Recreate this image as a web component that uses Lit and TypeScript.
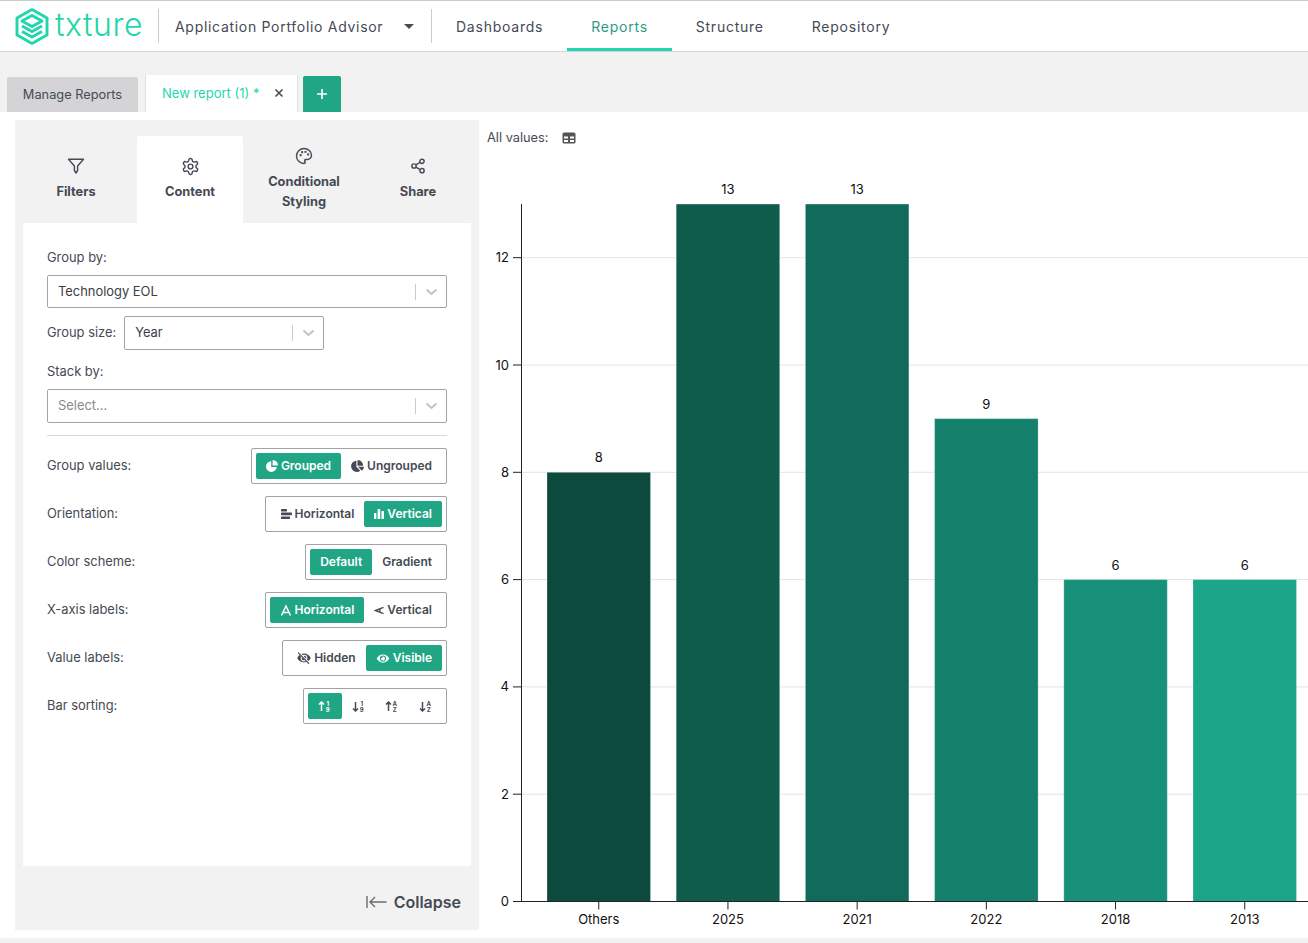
import { LitElement, html, css, svg } from "lit";
import { customElement } from "lit/decorators.js";

const PIE = "M527.79 288H290.5l158.03 158.03c6.04 6.04 15.98 6.53 22.19.68 38.7-36.46 65.32-85.61 73.13-140.86 1.34-9.46-6.51-17.85-16.06-17.85zm-15.83-64.8C503.72 103.74 408.26 8.28 288.8.04 279.68-.59 272 7.1 272 16.24V240h223.77c9.14 0 16.82-7.68 16.19-16.8zM224 288V50.71c0-9.55-8.39-17.4-17.84-16.06C86.99 51.49-4.1 155.6.14 280.37 4.5 408.51 114.83 513.59 243.03 511.98c50.4-.63 96.97-16.87 135.26-44.03 7.9-5.6 8.42-17.23 1.57-24.08L224 288z";
const EYE = "M572.52 241.4C518.29 135.59 410.93 64 288 64S57.68 135.64 3.48 241.41a32.35 32.35 0 0 0 0 29.19C57.71 376.41 165.07 448 288 448s230.32-71.64 284.52-177.41a32.35 32.35 0 0 0 0-29.19zM288 400a144 144 0 1 1 144-144 143.93 143.93 0 0 1-144 144zm0-240a95.31 95.31 0 0 0-25.31 3.79 47.85 47.85 0 0 1-66.9 66.9A95.78 95.78 0 1 0 288 160z";

const icons: Record<string, unknown> = {
  pieFull: html`<svg class="ti" width="12" height="12" viewBox="0 0 12 12" fill="currentColor"><path d="M5.200 1.200A5.400 5.400 0 1 0 10.800 7H5.200Z"/><path d="M6.600 0A5.400 5.400 0 0 1 12 5.500H6.600Z"/></svg>`,
  pieAlt: html`<svg class="ti" width="13" height="12" viewBox="0 0 544 512" fill="currentColor"><path d=${PIE}/></svg>`,
  hbars: html`<svg class="ti" width="12" height="10" viewBox="0 0 12 10" fill="currentColor"><rect x="1" y="0" width="6" height="2.400" rx=".6"/><rect x="1" y="3.600" width="11" height="2.600" rx=".6"/><rect x="1" y="7.400" width="9" height="2.600" rx=".6"/></svg>`,
  vbars: html`<svg class="ti" width="10" height="10" viewBox="0 0 10 10" fill="currentColor"><rect x="0" y="4" width="2.400" height="6" rx=".5"/><rect x="3.600" y="0" width="2.600" height="10" rx=".5"/><rect x="7.400" y="2" width="2.600" height="8" rx=".5"/></svg>`,
  letterA: html`<svg class="ti" width="12" height="11" viewBox="0 0 12 11" fill="none" stroke="currentColor" stroke-width="1.500"><path d="M1.500 10.500 6 1l4.500 9.500M3.100 7.400h5.800"/></svg>`,
  letterV: html`<svg class="ti" width="10" height="9" viewBox="0 0 11 9" fill="none" stroke="currentColor" stroke-width="1.500"><path d="M10.500 1 1.500 4.500 10.500 8M6.500 2.500v4"/></svg>`,
  eyeOff: html`<svg class="ti" width="14" height="12" viewBox="0 0 576 512" fill="currentColor"><path d=${EYE}/><path d="M60 10 520 500" stroke="#fff" stroke-width="80"/><path d="M40 30 500 500" stroke="currentColor" stroke-width="50"/></svg>`,
  eye: html`<svg class="ti" width="14" height="11" viewBox="0 0 576 512" fill="currentColor"><path d=${EYE}/></svg>`,
};

function sortIcon(down: boolean, top: string, bottom: string) {
  const arrow = down ? "M3.500 1v9M1 7.400 3.500 10 6 7.400" : "M3.500 10V1M1 3.600 3.500 1 6 3.600";
  return html`<svg width="13" height="11" viewBox="0 0 13 11">
    <path d=${arrow} fill="none" stroke="currentColor" stroke-width="1.500"/>
    <text class="mini" x="9.800" y="5" text-anchor="middle">${top}</text>
    <text class="mini" x="9.800" y="11" text-anchor="middle">${bottom}</text>
  </svg>`;
}

interface Opt { label?: string; icon?: unknown; on?: boolean; cls?: string }

@customElement("app-toggle")
class AppToggle extends LitElement {
  static properties = { opts: { attribute: false } };
  opts: Opt[] = [];
  static styles = css`
    :host { display: inline-block; }
    .box { display: flex; height: 36px; box-sizing: border-box; border: 1px solid #a3a3a3; border-radius: 2px; padding: 4px; background: #fff; }
    .opt { display: flex; align-items: center; justify-content: center; gap: 3px; height: 26px; padding: 0 10px; font: 600 12px "Inter", sans-serif; color: #454a54; border-radius: 2px; white-space: nowrap; }
    .opt span { padding-bottom: 1px; }
    .opt.on { background: #21a685; color: #fff; }
    .opt.sq { width: 33.500px; padding: 0; box-sizing: border-box; }
    .ti { flex: none; }
    .mini { font: 700 6px "Inter", sans-serif; fill: currentColor; }
  `;
  render() {
    return html`<div class="box">${this.opts.map(o => html`<div class="opt ${o.on ? "on" : ""} ${o.cls || ""}">${o.icon || ""}${o.label ? html`<span>${o.label}</span>` : ""}</div>`)}</div>`;
  }
}

@customElement("app-select")
class AppSelect extends LitElement {
  static properties = { text: {}, ph: { type: Boolean } };
  text = ""; ph = false;
  static styles = css`
    :host { display: block; }
    .sel { display: flex; align-items: center; height: 100%; box-sizing: border-box; border: 1px solid #a3a3a3; border-radius: 2px; padding-left: 10px; background: #fff; font: 400 12.900px "Inter", sans-serif; color: #3a3f48; }
    .t { flex: 1; padding-bottom: 1px; }
    .t.ph { color: #8a8a8a; }
    .sep { width: 1px; height: 16px; background: #ccc; }
    svg { margin: 0 8px 0 9px; }
  `;
  render() {
    return html`<div class="sel"><span class="t ${this.ph ? "ph" : ""}">${this.text}</span><span class="sep"></span>
      <svg width="13" height="8" viewBox="0 0 13 8" fill="none" stroke="#c2c2c2" stroke-width="2"><path d="M1.500 1.500 6.500 6 11.500 1.500"/></svg></div>`;
  }
}

const bars = [
  { l: "Others", v: 8, c: "#0b4a3d" },
  { l: "2025", v: 13, c: "#0f5b4c" },
  { l: "2021", v: 13, c: "#116b5a" },
  { l: "2022", v: 9, c: "#14806b" },
  { l: "2018", v: 6, c: "#17917a" },
  { l: "2013", v: 6, c: "#1ca588" },
];
const Y0 = 901.5, UNIT = 53.65, X0 = 547, STEP = 129.2, BW = 103.5;

@customElement("app-chart")
class AppChart extends LitElement {
  static styles = css`
    :host { position: absolute; left: 0; top: 0; pointer-events: none; }
    svg { display: block; }
    text { font: 400 13px "Inter", sans-serif; fill: #111; }
  `;
  render() {
    const ticks = [0, 2, 4, 6, 8, 10, 12];
    return html`<svg width="1308" height="943" viewBox="0 0 1308 943">
      ${ticks.slice(1).map(t => svg`<line x1="522" x2="1308" y1=${Y0 - t * UNIT} y2=${Y0 - t * UNIT} stroke="#e4e4e4"/>`)}
      ${bars.map((b, i) => svg`<rect x=${X0 + i * STEP} y=${Y0 - b.v * UNIT} width=${BW} height=${b.v * UNIT} fill=${b.c} stroke="#fff" stroke-opacity=".25"/>
        <text x=${X0 + i * STEP + BW / 2} y=${Y0 - b.v * UNIT - 10} text-anchor="middle">${b.v}</text>
        <line x1=${X0 + i * STEP + BW / 2} x2=${X0 + i * STEP + BW / 2} y1=${Y0} y2=${Y0 + 8} stroke="#222"/>
        <text x=${X0 + i * STEP + BW / 2} y="924" text-anchor="middle">${b.l}</text>`)}
      <line x1="521.500" x2="521.500" y1="204" y2=${Y0} stroke="#222"/>
      <line x1="521.500" x2="1308" y1=${Y0} y2=${Y0} stroke="#222"/>
      ${ticks.map(t => svg`<line x1="513" x2="522" y1=${Y0 - t * UNIT} y2=${Y0 - t * UNIT} stroke="#222"/>
        <text x="509" y=${Y0 - t * UNIT + 4.5} text-anchor="end">${t}</text>`)}
    </svg>`;
  }
}

@customElement("app-root")
class AppRoot extends LitElement {
  static styles = css`
    :host { display: block; position: relative; width: 1308px; height: 943px; overflow: hidden; background: #f2f2f2; font-family: "Inter", sans-serif; color: #454a54; }
    .hdr { display: flex; align-items: stretch; height: 52px; box-sizing: border-box; background: #fff; border-top: 1px solid #ccc; border-bottom: 1px solid #d4d4d4; }
    .logo { display: flex; align-items: center; gap: 6px; padding-left: 15px; width: 158px; box-sizing: border-box; }
    .logotxt { font: 300 32px "Inter", sans-serif; color: #1fd6ad; letter-spacing: .5px; line-height: 1; margin-top: -3px; }
    .vsep { width: 1px; height: 34px; margin-top: 8px; background: #ccc; }
    .app { display: flex; align-items: center; width: 272px; box-sizing: border-box; padding: 0 0 0 16px; font-size: 14px; letter-spacing: .7px; }
    .app span { flex: 1; }
    .caret { width: 0; height: 0; border: 5px solid transparent; border-top-color: #454a54; border-bottom: 0; margin-right: 17px; }
    .nav { display: flex; }
    .nav a { display: flex; align-items: center; justify-content: center; padding: 0 24px; font-size: 14px; letter-spacing: .76px; position: relative; }
    .nav a.on { color: #2f9b83; }
    .nav a.on::after { content: ""; position: absolute; left: 0; right: 0; bottom: 0; height: 3px; background: #1fd6ad; }
    .tabs { display: flex; align-items: flex-end; height: 60px; padding-left: 7px; box-sizing: border-box; }
    .tab { display: flex; align-items: center; box-sizing: border-box; font-size: 12.800px; }
    .manage { width: 131px; height: 35px; background: #d4d4d6; justify-content: center; border-radius: 2px 2px 0 0; }
    .cur { width: 153px; height: 37px; margin-left: 7px; background: #fff; border: 1px solid #e0e0e0; border-bottom: 0; border-top: 0; padding: 0 13px 1px 16px; color: #1fd6ad; justify-content: space-between; font-size: 13px; }
    .cur svg { color: #454a54; }
    .plus { width: 38px; height: 36px; margin-left: 5px; background: #21a685; border-radius: 2px 2px 0 0; display: flex; align-items: center; justify-content: center; }
    .main { display: flex; height: 826px; background: #fff; padding: 8px 0 8px 15px; box-sizing: border-box; }
    .panel { display: flex; flex-direction: column; width: 464px; height: 810px; box-sizing: border-box; background: #f2f2f2; padding: 16px 8px 0; }
    .ptabs { display: grid; grid-template-columns: repeat(4, 114px); margin: 0 -4px; height: 87px; }
    .pt { display: flex; flex-direction: column; align-items: center; justify-content: center; margin: 0 4px; text-align: center; font-size: 12.800px; font-weight: 650; line-height: 20px; border-radius: 2px 2px 0 0; gap: 8px; padding-top: 1px; box-sizing: border-box; }
    .pt.on { background: #fff; }
    .pt svg { display: block; }
    .pt svg.big { margin: -1.500px; }
    .pt.two { gap: 7px; padding: 0; }
    .pt .lbl { display: block; }
    .body { height: 643px; box-sizing: border-box; background: #fff; padding: 25px 24px 0; font-size: 12.900px; }
    .lab { line-height: 20px; display: block; }
    .s1 { height: 33px; margin-top: 7px; }
    .gs { display: flex; align-items: center; gap: 8px; margin-top: 8px; height: 34px; }
    .gs > span { padding-bottom: 1px; }
    .gs app-select { width: 200px; height: 34px; }
    .stack { margin-top: 12px; }
    .s2 { height: 34px; margin-top: 7px; }
    hr { border: 0; border-top: 1px solid #d8d8d8; margin: 12px 0; }
    .row { display: flex; align-items: center; justify-content: space-between; height: 36px; margin-bottom: 12px; }
    .row > span { padding-bottom: 1px; }
    .coll { flex: 1; display: flex; align-items: center; justify-content: flex-end; gap: 7px; padding: 8px 10px 0 0; font-size: 16px; font-weight: 600; }
    .chart-head { display: flex; align-items: center; gap: 13px; height: 20px; margin: 8px 0 0 8px; font-size: 12.800px; }
    .chart-head span { padding-bottom: 2px; }
    .area { flex: 1; }
  `;
  render() {
    return html`
      <div class="hdr">
        <div class="logo">
          <svg width="34" height="37" viewBox="0 0 34 37" fill="none" stroke="#1fd6ad" stroke-width="2.900" stroke-linejoin="round">
            <path d="M17 1.600 32 10v17L17 35.400 2 27V10z"/>
            <path d="M17 7.500 27 13 17 18.500 7 13z"/>
            <path d="M7 18l10 5.600L27 18"/>
            <path d="M7 23.400l10 5.600 10-5.600"/>
          </svg>
          <span class="logotxt">txture</span>
        </div>
        <div class="vsep"></div>
        <div class="app"><span>Application Portfolio Advisor</span><i class="caret"></i></div>
        <div class="vsep"></div>
        <div class="nav">
          <a>Dashboards</a><a class="on">Reports</a><a>Structure</a><a>Repository</a>
        </div>
      </div>
      <div class="tabs">
        <div class="tab manage">Manage Reports</div>
        <div class="tab cur"><span>New report (1) *</span>
          <svg width="10" height="10" viewBox="0 0 10 10" stroke="currentColor" stroke-width="1.600"><path d="M1.500 1.500l7 7M8.500 1.500l-7 7"/></svg></div>
        <div class="plus"><svg width="12" height="12" viewBox="0 0 12 12" stroke="#fff" stroke-width="1.600"><path d="M6 1v10M1 6h10"/></svg></div>
      </div>
      <div class="main">
        <div class="panel">
          <div class="ptabs">
            <div class="pt">
              <svg width="18" height="16" viewBox="0 0 18 16" fill="none" stroke="#454a54" stroke-width="1.400" stroke-linejoin="round"><path d="M1.500 1.200h15L10.600 8v4.500L9 15 7.400 12.500V8z"/></svg>
              <span class="lbl">Filters</span></div>
            <div class="pt on">
              <svg class="big" width="19" height="19" viewBox="0 0 24 24" fill="none" stroke="#454a54" stroke-width="1.800" stroke-linecap="round" stroke-linejoin="round"><path d="M12.220 2h-.44a2 2 0 0 0-2 2v.18a2 2 0 0 1-1 1.730l-.43.250a2 2 0 0 1-2 0l-.15-.08a2 2 0 0 0-2.730.730l-.22.380a2 2 0 0 0 .73 2.730l.15.100a2 2 0 0 1 1 1.720v.510a2 2 0 0 1-1 1.740l-.15.090a2 2 0 0 0-.73 2.730l.22.380a2 2 0 0 0 2.730.730l.15-.08a2 2 0 0 1 2 0l.43.250a2 2 0 0 1 1 1.730V20a2 2 0 0 0 2 2h.44a2 2 0 0 0 2-2v-.18a2 2 0 0 1 1-1.730l.43-.25a2 2 0 0 1 2 0l.15.080a2 2 0 0 0 2.730-.73l.22-.39a2 2 0 0 0-.73-2.730l-.15-.08a2 2 0 0 1-1-1.740v-.5a2 2 0 0 1 1-1.740l.15-.09a2 2 0 0 0 .73-2.730l-.22-.38a2 2 0 0 0-2.730-.73l-.15.080a2 2 0 0 1-2 0l-.43-.25a2 2 0 0 1-1-1.730V4a2 2 0 0 0-2-2z"/><circle cx="12" cy="12" r="3"/></svg>
              <span class="lbl">Content</span></div>
            <div class="pt two">
              <svg width="18" height="18" viewBox="0 0 24 24" fill="none" stroke="#454a54" stroke-width="1.900" stroke-linecap="round" stroke-linejoin="round"><path d="M12 2C6.500 2 2 6.500 2 12s4.500 10 10 10c1 0 1.600-.8 1.600-1.600 0-.5-.2-.8-.4-1.100-.3-.3-.4-.6-.4-1.100 0-.9.7-1.600 1.600-1.600h2c3 0 5.600-2.500 5.600-5.600C22 6 17.500 2 12 2z"/><circle cx="7.500" cy="11" r=".6" fill="#454a54"/><circle cx="9.500" cy="7" r=".6" fill="#454a54"/><circle cx="14" cy="6.500" r=".6" fill="#454a54"/><circle cx="17.500" cy="10" r=".6" fill="#454a54"/></svg>
              <span><span class="lbl">Conditional</span><span class="lbl">Styling</span></span></div>
            <div class="pt">
              <svg width="16" height="16" viewBox="0 0 24 24" fill="none" stroke="#454a54" stroke-width="2.200"><circle cx="18" cy="5" r="3.200"/><circle cx="6" cy="12" r="3.200"/><circle cx="18" cy="19" r="3.200"/><path d="M8.800 13.600l6.400 3.800M15.200 6.600 8.800 10.400"/></svg>
              <span class="lbl">Share</span></div>
          </div>
          <div class="body">
            <span class="lab">Group by:</span>
            <app-select class="s1" text="Technology EOL"></app-select>
            <div class="gs"><span>Group size:</span><app-select text="Year"></app-select></div>
            <span class="lab stack">Stack by:</span>
            <app-select class="s2" text="Select..." ph></app-select>
            <hr />
            <div class="row"><span>Group values:</span><app-toggle .opts=${[{ label: "Grouped", icon: icons.pieFull, on: true }, { label: "Ungrouped", icon: icons.pieAlt }]}></app-toggle></div>
            <div class="row"><span>Orientation:</span><app-toggle .opts=${[{ label: "Horizontal", icon: icons.hbars }, { label: "Vertical", icon: icons.vbars, on: true }]}></app-toggle></div>
            <div class="row"><span>Color scheme:</span><app-toggle .opts=${[{ label: "Default", on: true }, { label: "Gradient" }]}></app-toggle></div>
            <div class="row"><span>X-axis labels:</span><app-toggle .opts=${[{ label: "Horizontal", icon: icons.letterA, on: true }, { label: "Vertical", icon: icons.letterV }]}></app-toggle></div>
            <div class="row"><span>Value labels:</span><app-toggle .opts=${[{ label: "Hidden", icon: icons.eyeOff }, { label: "Visible", icon: icons.eye, on: true }]}></app-toggle></div>
            <div class="row"><span>Bar sorting:</span><app-toggle .opts=${[
              { icon: sortIcon(false, "1", "9"), on: true, cls: "sq" },
              { icon: sortIcon(true, "1", "9"), cls: "sq" },
              { icon: sortIcon(false, "A", "Z"), cls: "sq" },
              { icon: sortIcon(true, "A", "Z"), cls: "sq" },
            ]}></app-toggle></div>
          </div>
          <div class="coll">
            <svg width="21" height="12" viewBox="0 0 21 12" fill="none" stroke="#6d6d6d" stroke-width="1.400"><path d="M1 0v12M20.500 6H4M9 1 4 6l5 5"/></svg>
            <span>Collapse</span>
          </div>
        </div>
        <div class="area"><div class="chart-head"><span>All values:</span>
          <svg width="14" height="12" viewBox="0 0 14 12"><rect x=".5" y=".5" width="13" height="11" rx="1.600" fill="#555"/><path d="M2 4.500h4v2H2zM8 4.500h4v2H8zM2 8h4v2H2zM8 8h4v2H8z" fill="#fff"/></svg></div></div>
      </div>
      <app-chart></app-chart>
    `;
  }
}
